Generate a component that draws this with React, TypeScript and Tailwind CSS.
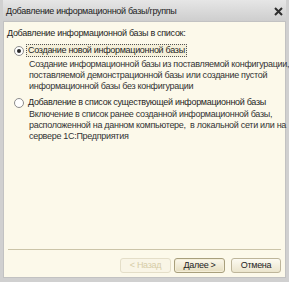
import type { FC } from "react";

const Radio: FC<{ checked?: boolean }> = ({ checked }) => (
  <span className="w-[10px] h-[10px] rounded-full border border-[#8c8c8c] bg-white flex items-center justify-center shrink-0">
    {checked && <span className="w-[4px] h-[4px] rounded-full bg-[#2a2a2a]" />}
  </span>
);

const Btn: FC<{ label: string; disabled?: boolean; primary?: boolean; w: string }> = ({ label, disabled, primary, w }) => (
  <button
    className={
      "h-[15px] rounded-[3px] border text-[9px] leading-none flex items-center justify-center " +
      w +
      (disabled
        ? " border-[#e4dec8] text-[#d6cca6] bg-[#f9f5e6]"
        : primary
          ? " border-[#a89f7c] text-[#222] bg-gradient-to-b from-[#fbf8ec] to-[#e6dec0] shadow-[inset_0_0_0_1px_#f4eed8]"
          : " border-[#bdb59a] text-[#222] bg-gradient-to-b from-[#fcfaf1] to-[#ebe5cd]")
    }
  >
    {label}
  </button>
);

export default function App() {
  return (
    <div
      className="w-[289px] h-[282px] bg-[#d0d0d0] flex flex-col px-[3px] pb-[4px] text-[#1e1e1e] whitespace-nowrap tracking-[-0.3px]"
      style={{ fontFamily: "'Liberation Sans', Arial, sans-serif" }}
    >
      <div className="h-[21px] flex items-center justify-between pl-[3px] pr-[3px] bg-gradient-to-b from-[#e6e6e6] to-[#cecece]">
        <span className="text-[9px] text-[#222] mt-[2px]">Добавление информационной базы/группы</span>
        <svg width="9" height="9" viewBox="0 0 9 9" className="mt-[2px]">
          <path d="M1 1 L8 8 M8 1 L1 8" stroke="#2e2e2e" strokeWidth="2" />
        </svg>
      </div>
      <div className="flex-1 bg-[#fcf9ea] border border-[#c2c2c2] flex flex-col px-[3px] text-[9px] leading-[11px]">
        <div className="mt-[6px]">Добавление информационной базы в список:</div>

        <div className="mt-[5px] ml-[7px] flex items-center gap-[2px]">
          <Radio checked />
          <span className="border border-dotted border-[#555] px-[1px] bg-[#f5f0da]">Создание новой информационной базы</span>
        </div>
        <div className="ml-[22px] mt-[2px] text-[#333]">
          <div>Создание информационной базы из поставляемой конфигурации,</div>
          <div>поставляемой демонстрационной базы или создание пустой</div>
          <div>информационной базы без конфигурации</div>
        </div>

        <div className="mt-[4px] ml-[7px] flex items-center gap-[2px]">
          <Radio />
          <span className="border border-transparent px-[1px]">Добавление в список существующей информационной базы</span>
        </div>
        <div className="ml-[22px] text-[#333]">
          <div>Включение в список ранее созданной информационной базы,</div>
          <div>расположенной на данном компьютере,&nbsp; в локальной сети или на</div>
          <div>сервере 1С:Предприятия</div>
        </div>

        <div className="flex-1" />
        <div className="h-px bg-[#cbc4a8] mx-[1px]" />
        <div className="flex justify-end mt-[8px] mb-[4px] mr-[1px]">
          <Btn label="< Назад" disabled w="w-[51px]" />
          <Btn label="Далее >" primary w="w-[51px] ml-[3px]" />
          <Btn label="Отмена" w="w-[50px] ml-[6px]" />
        </div>
      </div>
    </div>
  );
}
